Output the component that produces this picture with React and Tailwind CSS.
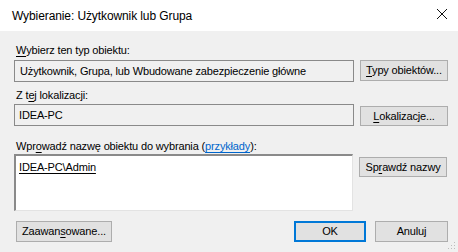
import React from 'react';

const Key = ({ children }) => <span className="underline underline-offset-2">{children}</span>;

const Button = ({ children, primary, className = '' }) => (
  <button
    className={`flex items-center justify-center bg-[#e1e1e1] text-black text-[11px] tracking-[-0.15px] leading-none whitespace-nowrap ${
      primary ? 'border-2 border-[#0078d7]' : 'border border-[#adadad]'
    } ${className}`}
  >
    <span>{children}</span>
  </button>
);

const App = () => {
  return (
    <div
      className="w-[458px] h-[252px] flex flex-col overflow-hidden bg-[#f0f0f0] text-black text-[11px] tracking-[-0.15px] whitespace-nowrap"
      style={{ fontFamily: '"Liberation Sans", Arial, sans-serif' }}
    >
      <div className="h-[31px] shrink-0 bg-white flex items-center justify-between pl-3 pr-2">
        <span className="text-[12px] tracking-[-0.1px] text-black">Wybieranie: Użytkownik lub Grupa</span>
        <svg width="12" height="12" viewBox="0 0 12 12" className="mr-[2px] mb-[3px]">
          <path d="M1 1 L11 11 M11 1 L1 11" stroke="#111" strokeWidth="1" />
        </svg>
      </div>

      <div className="flex flex-col pl-[14px] pr-[10px] relative flex-1">
        <div className="mt-[12px] h-[15px] leading-[15px] pl-[2px]">
          <Key>W</Key>ybierz ten typ obiektu:
        </div>
        <div className="mt-[2px] flex gap-[6px] items-start">
          <div className="w-[340px] h-[22px] border border-[#8a8a8a] bg-[#f0f0f0] flex items-center pl-[5px]">
            <span>Użytkownik, Grupa, lub Wbudowane zabezpieczenie główne</span>
          </div>
          <Button className="w-[88px] h-[21px]">
            <Key>T</Key>ypy obiektów...
          </Button>
        </div>

        <div className="mt-[6px] h-[15px] leading-[15px] pl-[2px]">
          Z t<Key>e</Key>j lokalizacji:
        </div>
        <div className="mt-[1px] flex gap-[6px] items-start">
          <div className="w-[340px] h-[22px] border border-[#8a8a8a] bg-[#f0f0f0] flex items-center pl-[4px]">
            <span>IDEA-PC</span>
          </div>
          <Button className="w-[88px] h-[20px] mt-[2px]">
            <Key>L</Key>okalizacje...
          </Button>
        </div>

        <div className="mt-[13px] h-[15px] leading-[15px] pl-[2px]">
          Wpr<Key>o</Key>wadź nazwę obiektu do wybrania (
          <span className="text-[#0066cc] underline underline-offset-2">przykłady</span>):
        </div>
        <div className="flex gap-[6px] items-start">
          <div className="w-[339px] h-[57px] bg-white border-t-2 border-l-2 border-[#8a8a8a] border-r border-b border-r-[#e3e3e3] border-b-[#e3e3e3] pl-[3px] pt-[4px] leading-[15px]">
            <span className="underline underline-offset-2">IDEA-PC\Admin</span>
          </div>
          <Button className="w-[88px] h-[20px] mt-[3px]">
            Sp<Key>r</Key>awdź nazwy
          </Button>
        </div>

        <div className="mt-[10px] flex items-center">
          <Button className="w-[96px] h-[21px] ml-[2px]">
            Zaawan<Key>s</Key>owane...
          </Button>
          <div className="flex-1" />
          <Button primary className="w-[72px] h-[21px]">
            OK
          </Button>
          <Button className="w-[73px] h-[21px] ml-[9px]">Anuluj</Button>
        </div>

        <svg width="8" height="8" viewBox="0 0 8 8" className="absolute right-[2px] bottom-[2px]">
          <rect x="6" y="0" width="1" height="1" fill="#bcbcbc" />
          <rect x="3" y="3" width="1" height="1" fill="#bcbcbc" />
          <rect x="6" y="3" width="1" height="1" fill="#bcbcbc" />
          <rect x="0" y="6" width="1" height="1" fill="#bcbcbc" />
          <rect x="3" y="6" width="1" height="1" fill="#bcbcbc" />
          <rect x="6" y="6" width="1" height="1" fill="#bcbcbc" />
        </svg>
      </div>
    </div>
  );
};

export default App;
